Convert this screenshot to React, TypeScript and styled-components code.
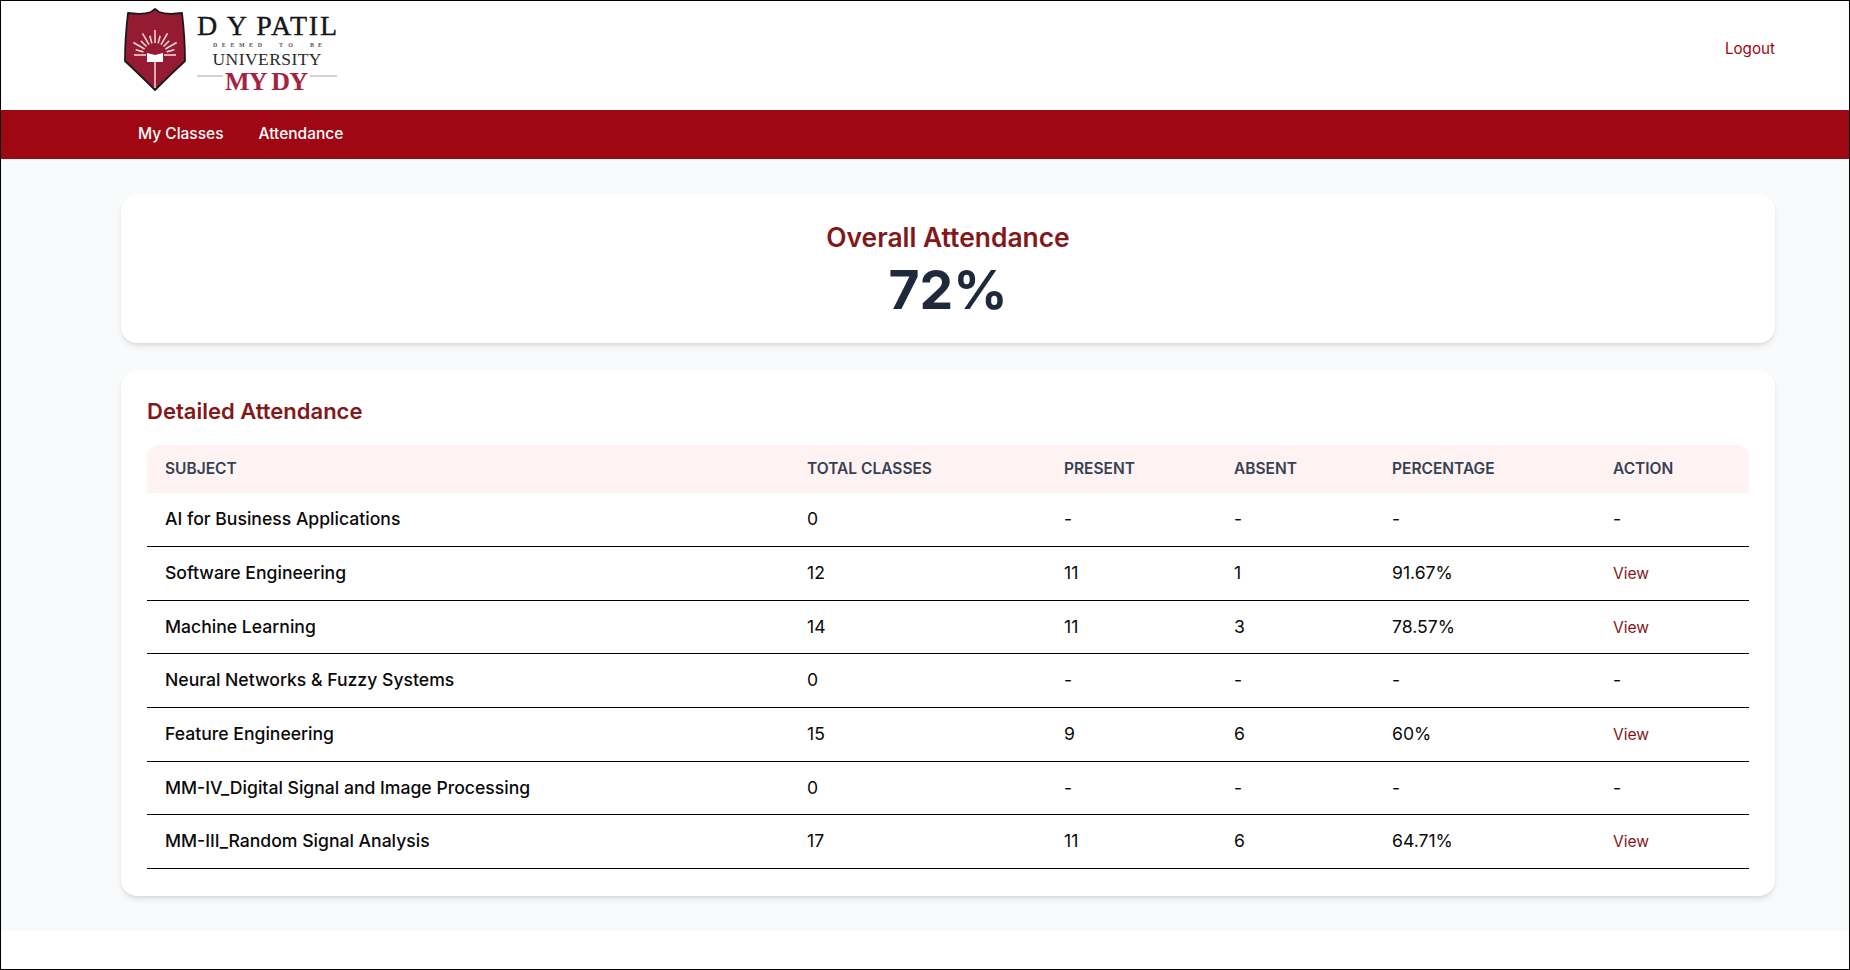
import React from "react";
import styled, { createGlobalStyle } from "styled-components";

const Global = createGlobalStyle`
  html, body { margin: 0; padding: 0; background: #fff; }
  body { font-family: Inter, "Liberation Sans", sans-serif; }
  * { box-sizing: border-box; }
`;

const Frame = styled.div`
  width: 1850px;
  height: 970px;
  border: 1px solid #000;
  background: #fff;
  overflow: hidden;
`;
const Header = styled.header`
  height: 109px;
  display: flex;
  align-items: flex-start;
  justify-content: space-between;
  padding: 7px 74px 0 122px;
`;
const LogoutLink = styled.a`
  margin-top: 29px;
  font-size: 15.2px;
  line-height: 24px;
  color: #9f0712;
`;
const NavBar = styled.nav`
  height: 49px;
  padding: 0 0 3px 137px;
  background: #9f0712;
  display: flex;
  align-items: center;
  gap: 35px;
`;
const NavLink = styled.a`
  color: #fff;
  font-size: 15.5px;
  font-weight: 500;
`;
const Main = styled.main`
  background: #f9fafb;
  height: 772px;
  padding: 35px 74px 0 120px;
  display: flex;
  flex-direction: column;
  gap: 27px;
`;
const Card = styled.section`
  background: #fff;
  border-radius: 16px;
  box-shadow: 0 4px 6px -1px rgba(0,0,0,.1), 0 2px 4px -2px rgba(0,0,0,.1);
`;
const SummaryCard = styled(Card)`
  height: 149px;
  padding-top: 27px;
  text-align: center;
`;
const SummaryTitle = styled.h2`
  margin: 0;
  font-size: 26.4px;
  line-height: 32px;
  font-weight: 600;
  color: #82181a;
`;
const SummaryValue = styled.div`
  font-size: 53.5px;
  line-height: 60px;
  font-weight: 700;
  color: #1e293b;
  margin-top: 7px;
`;
const DetailCard = styled(Card)`
  height: 526px;
  padding: 25px 26px 26px;
`;
const DetailTitle = styled.h3`
  margin: 0 0 18px;
  font-size: 22px;
  line-height: 32px;
  font-weight: 600;
  color: #82181a;
`;
const Table = styled.table`
  width: 1602px;
  border-collapse: collapse;
  table-layout: fixed;
`;
const HeadCell = styled.th`
  height: 48px;
  padding: 0 18px 2px;
  background: #fef2f2;
  text-align: left;
  font-size: 15.5px;
  font-weight: 600;
  color: #364153;
  text-transform: uppercase;
  &:first-child { border-top-left-radius: 12px; }
  &:last-child { border-top-right-radius: 12px; }
`;
const Row = styled.tr`
  border-bottom: 1px solid #000;
`;
const Cell = styled.td`
  height: 53.67px;
  padding: 0 18px 2px;
  font-size: 17.6px;
  font-weight: 500;
  color: #0a0a0a;
`;
const ValueCell = styled(Cell)`
  font-weight: 400;
`;
const ViewLink = styled.a`
  font-size: 15.6px;
  font-weight: 400;
  color: #82181a;
`;

const columns = [
  { name: "Subject", width: 642 },
  { name: "Total Classes", width: 257 },
  { name: "Present", width: 170 },
  { name: "Absent", width: 158 },
  { name: "Percentage", width: 221 },
  { name: "Action", width: 154 },
];

const rows = [
  ["AI for Business Applications", "0", "-", "-", "-", false],
  ["Software Engineering", "12", "11", "1", "91.67%", true],
  ["Machine Learning", "14", "11", "3", "78.57%", true],
  ["Neural Networks & Fuzzy Systems", "0", "-", "-", "-", false],
  ["Feature Engineering", "15", "9", "6", "60%", true],
  ["MM-IV_Digital Signal and Image Processing", "0", "-", "-", "-", false],
  ["MM-III_Random Signal Analysis", "17", "11", "6", "64.71%", true],
] as const;

const rays = [-75, -60, -45, -30, -15, 0, 15, 30, 45, 60, 75];
const serif = "Liberation Serif, serif";

function Logo() {
  return (
    <svg width="216" height="88" viewBox="0 0 216 88" aria-label="D Y Patil University My DY">
      <path
        d="M5 5 Q20 7 28 4 L32 1 L36 4 Q44 7 59 5 Q62 30 62 53 Q48 66 32 82 Q16 66 2 53 Q2 30 5 5 Z"
        fill="#951b33"
        stroke="#1a1a1a"
        strokeWidth="1.8"
        strokeLinejoin="round"
      />
      <g stroke="#f0d3d8" strokeWidth="1.6">
        {rays.map((a) => {
          const r = (a * Math.PI) / 180;
          const long = a % 30 === 0;
          const inner = 12;
          const outer = long ? 25 : 20;
          return (
            <line
              key={a}
              x1={32 + inner * Math.sin(r)}
              y1={47 - inner * Math.cos(r)}
              x2={32 + outer * Math.sin(r)}
              y2={47 - outer * Math.cos(r)}
            />
          );
        })}
        <line x1="11" y1="47" x2="23" y2="47" />
        <line x1="41" y1="47" x2="53" y2="47" />
        <line x1="32" y1="54" x2="32" y2="80" strokeWidth="1.6" />
      </g>
      <path d="M24 45 L32 47 L40 45 L40 54 L24 54 Z" fill="#fff" />
      <text x="74" y="27" fontFamily={serif} fontSize="28" fill="#161616" stroke="#161616" strokeWidth=".35" textLength="140">D Y PATIL</text>
      <g fontFamily={serif} fontSize="6" fontWeight="700" fill="#555">
        <text x="90" y="39" textLength="49">DEEMED</text>
        <text x="156" y="39" textLength="14">TO</text>
        <text x="187" y="39" textLength="12">BE</text>
      </g>
      <text x="89.5" y="56.5" fontFamily={serif} fontSize="17.5" fill="#2a2a2a" textLength="109">UNIVERSITY</text>
      <line x1="74" y1="68" x2="100" y2="68" stroke="#c4c4c4" strokeWidth="1.5" />
      <line x1="187" y1="68" x2="214" y2="68" stroke="#c4c4c4" strokeWidth="1.5" />
      <text x="102" y="82" fontFamily={serif} fontSize="26" fontWeight="700" fill="#a6233f" textLength="83">MY DY</text>
    </svg>
  );
}

export default function App() {
  return (
    <Frame>
      <Global />
      <Header>
        <Logo />
        <LogoutLink>Logout</LogoutLink>
      </Header>
      <NavBar>
        <NavLink>My Classes</NavLink>
        <NavLink>Attendance</NavLink>
      </NavBar>
      <Main>
        <SummaryCard>
          <SummaryTitle>Overall Attendance</SummaryTitle>
          <SummaryValue>72%</SummaryValue>
        </SummaryCard>
        <DetailCard>
          <DetailTitle>Detailed Attendance</DetailTitle>
          <Table>
            <colgroup>
              {columns.map((c) => (
                <col key={c.name} width={c.width} />
              ))}
            </colgroup>
            <thead>
              <tr>
                {columns.map((c) => (
                  <HeadCell key={c.name}>{c.name}</HeadCell>
                ))}
              </tr>
            </thead>
            <tbody>
              {rows.map((r) => (
                <Row key={r[0]}>
                  <Cell>{r[0]}</Cell>
                  <ValueCell>{r[1]}</ValueCell>
                  <ValueCell>{r[2]}</ValueCell>
                  <ValueCell>{r[3]}</ValueCell>
                  <ValueCell>{r[4]}</ValueCell>
                  <ValueCell>{r[5] ? <ViewLink>View</ViewLink> : "-"}</ValueCell>
                </Row>
              ))}
            </tbody>
          </Table>
        </DetailCard>
      </Main>
    </Frame>
  );
}
